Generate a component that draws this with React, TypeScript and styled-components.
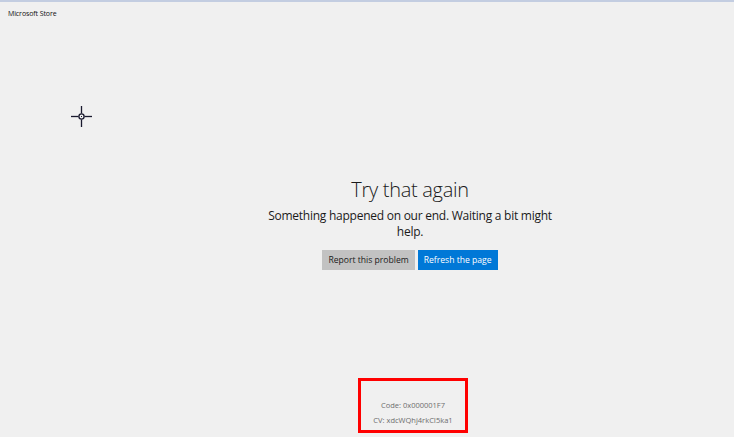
import React from 'react';
import styled, { createGlobalStyle } from 'styled-components';

const GlobalStyle = createGlobalStyle`
  html, body {
    margin: 0;
    padding: 0;
    background: #f0f0f0;
  }
  body {
    font-family: "Segoe UI", "Open Sans", "Noto Sans", sans-serif;
    color: #1a1a1a;
  }
`;

const Window = styled.div`
  position: relative;
  height: 437px;
  display: flex;
  flex-direction: column;
  border-top: 2px solid #c3cde1;
  box-sizing: border-box;
  overflow: hidden;
`;

const TitleBar = styled.div`
  height: 22px;
  display: flex;
  align-items: center;
  padding-left: 8px;
  font-size: 7px;
  letter-spacing: -0.1px;
  color: #111;
`;

const Main = styled.main`
  flex: 1;
  display: flex;
  flex-direction: column;
  align-items: center;
  padding-left: 86px;
`;

const Message = styled.section`
  margin-top: 153px;
  width: 300px;
  display: flex;
  flex-direction: column;
  align-items: center;
  text-align: center;
`;

const Title = styled.h1`
  margin: 0;
  font-size: 20px;
  font-weight: 300;
  line-height: 26px;
  letter-spacing: -0.3px;
  color: #1a1a1a;
`;

const Text = styled.p`
  margin: 5px 0 0;
  font-size: 12px;
  line-height: 16px;
  letter-spacing: -0.25px;
  color: #1a1a1a;
`;

const Actions = styled.div`
  margin-top: 10px;
  display: flex;
  gap: 3px;
`;

const Button = styled.button<{ $primary?: boolean }>`
  height: 20px;
  padding: 0 6px;
  border: none;
  font-family: inherit;
  font-size: 8.6px;
  color: ${({ $primary }) => ($primary ? '#fff' : '#1a1a1a')};
  background: ${({ $primary }) => ($primary ? '#0078d7' : '#c2c2c2')};
`;

const ErrorBox = styled.div`
  margin-top: 108px;
  margin-left: 6px;
  width: 110px;
  height: 55px;
  box-sizing: border-box;
  border: 3px solid #ff0000;
  display: flex;
  flex-direction: column;
  justify-content: flex-end;
  align-items: center;
  padding-bottom: 4px;
  gap: 4px;
`;

const Code = styled.span`
  font-size: 7.5px;
  line-height: 11px;
  color: #6d6d6d;
`;

const Cursor = styled.svg`
  position: absolute;
  left: 70px;
  top: 103px;
`;

export default function App() {
  return (
    <>
      <GlobalStyle />
      <Window>
        <TitleBar>Microsoft Store</TitleBar>
        <Cursor width="23" height="23" viewBox="0 0 23 23">
          <g stroke="#1a1a2e" strokeWidth="1.3" fill="none">
            <line x1="11.5" y1="1" x2="11.5" y2="8.5" />
            <line x1="11.5" y1="14.5" x2="11.5" y2="22" />
            <line x1="1" y1="11.5" x2="8.5" y2="11.5" />
            <line x1="14.5" y1="11.5" x2="22" y2="11.5" />
            <circle cx="11.5" cy="11.5" r="2.6" />
          </g>
          <rect x="11" y="11" width="1" height="1" fill="#1a1a2e" />
        </Cursor>
        <Main>
          <Message>
            <Title>Try that again</Title>
            <Text>Something happened on our end. Waiting a bit might help.</Text>
            <Actions>
              <Button>Report this problem</Button>
              <Button $primary>Refresh the page</Button>
            </Actions>
          </Message>
          <ErrorBox>
            <Code>Code: 0x000001F7</Code>
            <Code>CV: xdcWQhj4rkCI5ka1</Code>
          </ErrorBox>
        </Main>
      </Window>
    </>
  );
}
